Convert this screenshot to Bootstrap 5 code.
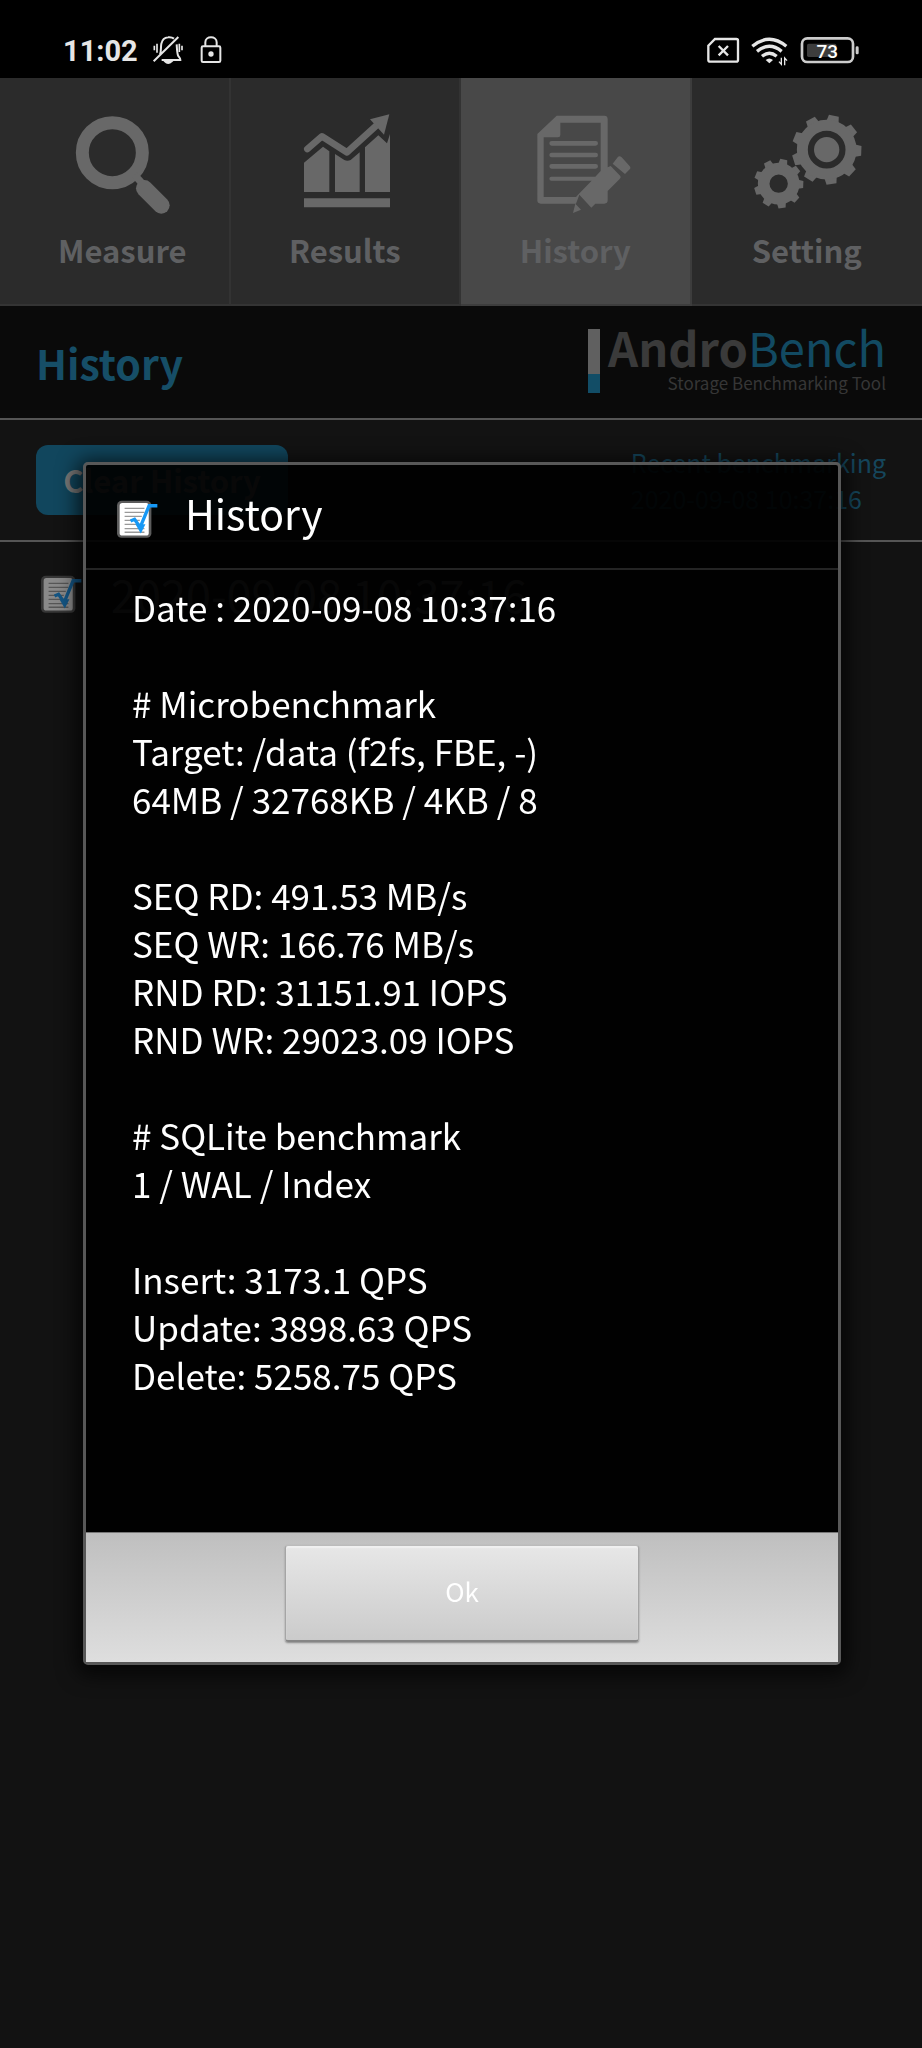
<!DOCTYPE html>
<html lang="en">
<head>
<meta charset="utf-8">
<meta name="viewport" content="width=device-width, initial-scale=1">
<title>AndroBench - History</title>
<link href="https://cdn.jsdelivr.net/npm/bootstrap@5.3.0/dist/css/bootstrap.min.css" rel="stylesheet">
<style>
  body { background: #121212; font-family: "Noto Sans CJK SC", "Noto Sans", sans-serif; color: #666; }
  svg { display: block; flex: none; }

  .status-bar { height: 78px; padding: 24px 62px 0 63px; background: #000; color: #e6e6e6; font: 700 29px/54px Roboto, sans-serif; }
  .status-bar svg { height: 54px; }
  .battery-level { font: 500 57px Roboto, sans-serif; }

  .tab-link { height: 228px; padding-top: 36px; gap: 16px; background: #2b2b2b; color: #5f6062; border-right: 2px solid #333; border-bottom: 2px solid #343434; font-size: 31px; font-weight: 700; line-height: 40px; }
  .tab-link.active { background: #484848; border-color: #3d3d3d; }
  .tab-link:last-child { border-right: 0; }
  .tab-link svg { width: 120px; height: 100px; fill: #686868; stroke: #686868; stroke-width: 0; }

  .title-bar { height: 114px; padding: 0 36px; background: #0a0a0a; border-bottom: 2px solid #555; }
  .page-title { color: #164e67; font-size: 41px; font-weight: 700; line-height: 60px; }
  .brand-bar { width: 12px; height: 64px; background: linear-gradient(#606060 45px, #124d66 45px); }
  .brand-name { color: #3a3a3a; font-size: 47px; line-height: 36px; }
  .brand-name span { color: #124a62; }
  .brand-tag { margin-top: 6px; color: #363636; font-size: 17px; line-height: 24px; }

  .tool-row { height: 122px; padding: 0 36px; background: #131313; border-bottom: 2px solid #555; }
  .clear-btn, .clear-btn:hover { width: 252px; height: 70px; background: #11465d; color: #777; border: 0; border-radius: 12px; font-size: 31px; font-weight: 700; line-height: 40px; }
  .recent { color: #15465c; font-size: 25px; line-height: 36px; }

  .entry { padding: 22px 40px; gap: 28px; font-size: 45px; line-height: 60px; color: #666; text-decoration: none; }
  .entry svg { opacity: .5; }

  .modal { top: 78px; height: auto; bottom: 0; }
  .modal-dialog { max-width: none; margin: 0 81px 0 83px; min-height: 100%; }
  .modal-content { background: rgba(0,0,0,.93); color: #fff; border: 3px solid #585858; border-radius: 5px; box-shadow: 0 4px 20px 6px rgba(0,0,0,.7); }
  .modal-header { height: 105px; padding: 0 30px; gap: 26px; border-bottom: 2px solid #242424; border-radius: 0; }
  .modal-header svg { margin-top: 6px; }
  .modal-title { padding-bottom: 8px; font-size: 41px; line-height: 60px; font-weight: 400; }
  .modal-body { padding: 13px 46px 133px; font-size: 35px; line-height: 48px; }
  .modal-body p { margin-bottom: 48px; }
  .modal-body p:last-child { margin: 0; }
  .modal-footer { padding: 12px 0 20px; background: linear-gradient(#bfbfbf, #dedede); border-top: 1px solid #777; border-radius: 0; }
  .ok-btn, .ok-btn:hover { width: 47%; height: 97px; margin: 0; padding: 0 0 4px; color: #fff; font-size: 26px; background: linear-gradient(#e7e7e7, #cbcbcb); border: 1px solid #a5a5a5; border-top-color: #bbb; border-bottom: 2px solid #858585; border-radius: 3px; box-shadow: 0 1px 2px #888, inset 0 2px 1px #f0f0f0; }
</style>
</head>
<body class="min-vh-100">

<svg width="0" height="0" class="position-absolute" aria-hidden="true">
  <symbol id="note" viewBox="0 0 130 120">
    <rect x="3" y="5" width="104" height="112" rx="14" fill="#5c5c5c"/>
    <rect x="11" y="12" width="88" height="98" rx="8" fill="#fff"/>
    <path d="M26 28h60M26 40h60M26 52h52M26 64h46M26 76h52M26 89h60M26 100h60" stroke="#999" stroke-width="4"/>
    <path d="M44 66l12-5 17 24 27-65h25" fill="none" stroke="#1698f5" stroke-width="10"/>
    <path d="M59 76h30L75 104z" fill="#1698f5"/>
  </symbol>
</svg>

<header class="status-bar d-flex justify-content-between">
  <div class="d-flex">
    <time>11:02</time>
    <svg width="90" viewBox="438 72 270 162" class="ms-2" fill="none" stroke="#e6e6e6" stroke-width="6" role="img" aria-label="Silent, locked">
      <path d="M480 163c4-8 2-22 4-32 3-12 10-18 20-19 8-1 14 1 18 4M530 133c1 14 1 24 4 33 2 6 7 7 7 14h-56M461 184L535 111"/>
      <path d="M495 184q9 10 20 0z" fill="#e6e6e6"/>
      <path d="M463 137v14M471 131v27M546 137v14M538 131v25" stroke-width="5"/>
      <rect x="605" y="139" width="56" height="47" rx="4"/>
      <path d="M616 138v-11c0-20 34-20 34 0v11"/>
      <circle cx="633" cy="162" r="8" fill="#e6e6e6" stroke="none"/>
    </svg>
  </div>
  <svg width="154" viewBox="735 72 462 162" fill="none" stroke="#e6e6e6" role="img" aria-label="No SIM, Wi-Fi, battery 73 percent">
    <path d="M762 117h64q5 0 5 5v58q0 5-5 5h-79q-5 0-5-5v-43z" stroke-width="7"/>
    <path d="M773 138l28 28M801 138l-28 28" stroke-width="7"/>
    <path d="M874 139q51-42 102 0M888 154q37-30 74 0M903 169q22-18 44 0" stroke-width="10"/>
    <path d="M914 180q11-9 22 0l-11 10z" fill="#e6e6e6" stroke="none"/>
    <path d="M961 173v20l-7-8M971 196v-22l7 8" stroke-width="4"/>
    <rect x="1023" y="115" width="153" height="71" rx="16" stroke-width="8" stroke="#ccc"/>
    <rect x="1038" y="131" width="88" height="40" rx="5" fill="#3d3d3d" stroke="none"/>
    <rect x="1184" y="139" width="9" height="24" rx="4" fill="#ccc" stroke="none"/>
    <text class="battery-level" x="1099" y="174" text-anchor="middle" fill="#fff" stroke="none">73</text>
  </svg>
</header>

<nav class="row g-0" aria-label="Main">
  <a href="#measure" class="tab-link ps-3 col-3 d-flex flex-column align-items-center text-decoration-none">
    <svg viewBox="187 117 360 300">
      <circle cx="338" cy="233" r="90" fill="none" stroke-width="39"/>
      <path d="M405 300l25 28" stroke-width="22"/>
      <path d="M434 340l51 51" stroke-width="50" stroke-linecap="round"/>
    </svg>
    Measure
  </a>
  <a href="#results" class="tab-link col-3 d-flex flex-column align-items-center text-decoration-none">
    <svg viewBox="855 117 360 300">
      <path d="M912 370h258v27H912zM912 263l57-48 19 14v122h-76zM1005 237l28 18q9 5 19 0l27-23v119h-74zM1095 217l40-36 26 24 9-28v174h-75z"/>
      <path d="M922 222l44-38 75 48 94-86" fill="none" stroke-width="20" stroke-linecap="round" stroke-linejoin="round"/>
      <path d="M1168 118l-58 15 42 46z"/>
    </svg>
    Results
  </a>
  <a href="#history" aria-current="page" class="tab-link active col-3 d-flex flex-column align-items-center text-decoration-none">
    <svg viewBox="163 117 360 300">
      <path fill-rule="evenodd" d="M288 122h143q10 0 10 10v145l9-4 29 30q3 4-2 9l-36 36v28q0 10-10 10h-27l-12 12-36-39-10 27H240q-10 0-10-10V177zM299 143v37q0 7-7 7h-43v179h97l9-10 38-39H272q-6 0-6-6t6-6h132l16-17V143z"/>
      <path d="M273 205h132M273 240h132M273 274h132" stroke-width="14" stroke-linecap="round"/>
      <path d="M456 266l15-19q5-6 12 0l23 25q6 6 1 11l-14 14zM344 386l17 18-24 10z"/>
    </svg>
    History
  </a>
  <a href="#setting" class="tab-link col-3 d-flex flex-column align-items-center text-decoration-none">
    <svg viewBox="857 117 360 300">
      <defs>
        <path id="tooth" d="M-19-82l4-22h30l4 22z"/>
        <g id="teeth">
          <use href="#tooth" transform="rotate(12)"/><use href="#tooth" transform="rotate(52)"/><use href="#tooth" transform="rotate(92)"/>
          <use href="#tooth" transform="rotate(132)"/><use href="#tooth" transform="rotate(172)"/><use href="#tooth" transform="rotate(212)"/>
          <use href="#tooth" transform="rotate(252)"/><use href="#tooth" transform="rotate(292)"/><use href="#tooth" transform="rotate(332)"/>
        </g>
      </defs>
      <use href="#teeth" transform="translate(1096 224)"/>
      <circle cx="1096" cy="224" r="73" fill="none" stroke-width="33"/>
      <circle cx="1096" cy="224" r="38"/>
      <use href="#teeth" transform="translate(952 326) scale(.71)"/>
      <circle cx="952" cy="326" r="45" fill="none" stroke-width="35"/>
    </svg>
    Setting
  </a>
</nav>

<section class="title-bar d-flex justify-content-between align-items-center">
  <h1 class="page-title m-0">History</h1>
  <div class="d-flex gap-2">
    <div class="brand-bar"></div>
    <div class="text-end">
      <div class="brand-name"><b>Andro</b><span>Bench</span></div>
      <div class="brand-tag">Storage Benchmarking Tool</div>
    </div>
  </div>
</section>

<section class="tool-row d-flex justify-content-between align-items-center">
  <button type="button" class="btn clear-btn p-0">Clear History</button>
  <div class="recent">Recent benchmarking<br>2020-09-08 10:37:16</div>
</section>

<main>
  <a href="#entry" class="entry d-flex align-items-center">
    <svg width="43" height="40"><use href="#note"/></svg>
    2020-09-08 10:37:16
  </a>
</main>

<div class="modal d-block" tabindex="-1" role="dialog" aria-modal="true" aria-labelledby="dialogTitle">
  <div class="modal-dialog modal-dialog-centered">
    <div class="modal-content">
      <div class="modal-header justify-content-start">
        <svg width="43" height="40"><use href="#note"/></svg>
        <h2 class="modal-title" id="dialogTitle">History</h2>
      </div>
      <div class="modal-body">
        <p>Date : 2020-09-08 10:37:16</p>
        <p># Microbenchmark<br>Target: /data (f2fs, FBE, -)<br>64MB / 32768KB / 4KB / 8</p>
        <p>SEQ RD: 491.53 MB/s<br>SEQ WR: 166.76 MB/s<br>RND RD: 31151.91 IOPS<br>RND WR: 29023.09 IOPS</p>
        <p># SQLite benchmark<br>1 / WAL / Index</p>
        <p>Insert: 3173.1 QPS<br>Update: 3898.63 QPS<br>Delete: 5258.75 QPS</p>
      </div>
      <div class="modal-footer justify-content-center">
        <button type="button" class="btn ok-btn">Ok</button>
      </div>
    </div>
  </div>
</div>

<script src="https://cdn.jsdelivr.net/npm/bootstrap@5.3.0/dist/js/bootstrap.bundle.min.js"></script>
</body>
</html>
